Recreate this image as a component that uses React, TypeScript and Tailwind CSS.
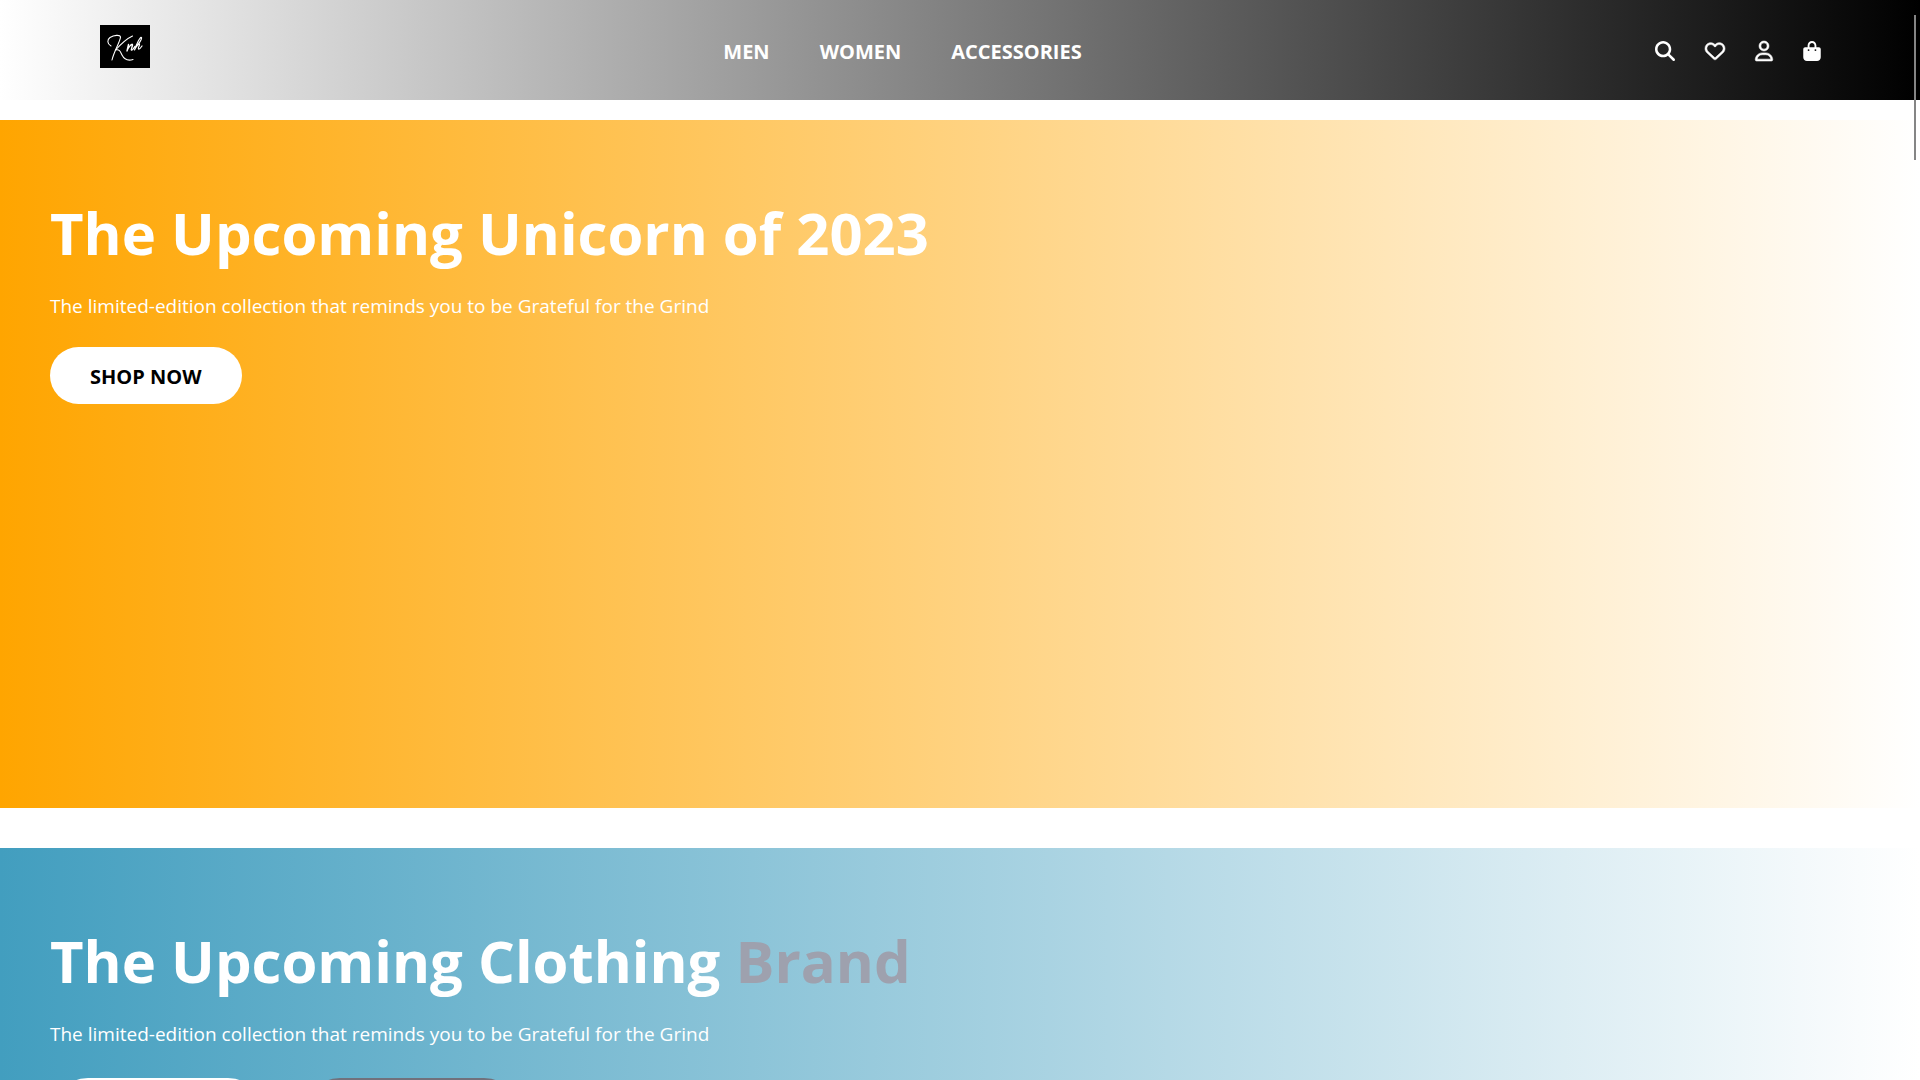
import { FaMagnifyingGlass, FaRegHeart, FaRegUser, FaBagShopping } from "react-icons/fa6";
import type { ReactNode } from "react";

function Logo() {
  return (
    <svg viewBox="0 0 50 43" className="h-[43px] w-[50px]" role="img" aria-label="Knh">
      <rect width="50" height="43" fill="#000" />
      <g fill="none" stroke="#fff" strokeLinecap="round" strokeLinejoin="round">
        <path strokeWidth="1.100" d="M11 21C7 19 7 14.500 10 12.500C14 10 20 9.500 20.500 12C20.500 16 14 26 12 35" />
        <path strokeWidth="1.100" d="M32.500 11C27 13.500 21 19 15.500 25C20 24 20.500 27 22 30C24 34 28 36 33 34.500" />
        <path strokeWidth="1.400" d="M28.500 19.500L27 26C28.500 22 31.500 18.500 32.500 19.500C33 20.500 30.500 24.500 31.500 25C32.500 25.500 34 23 35 21.500" />
        <path strokeWidth="1.200" d="M35 23C38 20 42 14.500 41.500 12.500C40.500 11 37 18 34.500 25C36.500 21 39 18 39.500 19C40 20.500 37.500 23 38.500 24C39.500 24.500 41 22.500 42 21" />
      </g>
    </svg>
  );
}

const links = ["MEN", "WOMEN", "ACCESSORIES"];

const actions = [
  { label: "Search", Icon: FaMagnifyingGlass, size: "w-5" },
  { label: "Wishlist", Icon: FaRegHeart, size: "w-5 stroke-current [stroke-width:14]" },
  { label: "Account", Icon: FaRegUser, size: "w-[18px] stroke-current [stroke-width:14]" },
  { label: "Bag", Icon: FaBagShopping, size: "w-[18px]" },
];

function Header() {
  return (
    <header className="flex h-[100px] items-start justify-between bg-[linear-gradient(to_right,#fff,#000)] pr-[99px] pl-[100px] pt-[25px]">
      <a href="#home">
        <Logo />
      </a>
      <nav className="flex gap-[50px] pt-3 text-[20px] leading-[30px] font-bold text-white">
        {links.map((link) => (
          <a key={link} href="#shop">
            {link}
          </a>
        ))}
      </nav>
      <div className="flex gap-[30px] pt-4 text-white">
        {actions.map(({ label, Icon, size }) => (
          <button key={label} type="button" aria-label={label}>
            <Icon className={`h-5 overflow-visible ${size}`} />
          </button>
        ))}
      </div>
    </header>
  );
}

function Hero({ background, title, children }: { background: string; title: ReactNode; children: ReactNode }) {
  return (
    <section className={`min-h-[688px] px-[50px] pt-[73px] pb-10 text-white ${background}`}>
      <h1 className="text-[58px] leading-[80px] font-bold">{title}</h1>
      <p className="mt-[18px] text-[19px] leading-[30px]">The limited-edition collection that reminds you to be Grateful for the Grind</p>
      {children}
    </section>
  );
}

export default function App() {
  return (
    <div className="h-screen overflow-y-auto bg-white font-['Segoe_UI','Open_Sans',sans-serif] [scrollbar-width:none]">
      <Header />
      <main className="flex flex-col gap-10 pt-5">
        <Hero background="bg-[linear-gradient(to_right,#ffa500,#fff)]" title="The Upcoming Unicorn of 2023">
          <button type="button" className="mt-[26px] rounded-full bg-white px-10 pt-[14px] pb-3 text-[20px] leading-[31px] font-bold text-black">
            SHOP NOW
          </button>
        </Hero>
        <Hero
          background="bg-[linear-gradient(to_right,#429ebf,#fff)]"
          title={
            <>
              The Upcoming Clothing <span className="text-[#9ea1ae]">Brand</span>
            </>
          }
        >
          <div className="mt-[29px] flex gap-9">
            <button type="button" className="h-[76px] rounded-full bg-white px-[52px] text-[20px] font-bold text-black">
              SHOP NOW
            </button>
            <button type="button" className="h-[76px] rounded-full bg-[#71717c] px-[45px] text-[20px] font-bold text-white">
              LEARN MORE
            </button>
          </div>
        </Hero>
      </main>
      <div aria-hidden="true" className="fixed top-[15px] right-1 h-[145px] w-[2px] bg-[#858585]" />
    </div>
  );
}
